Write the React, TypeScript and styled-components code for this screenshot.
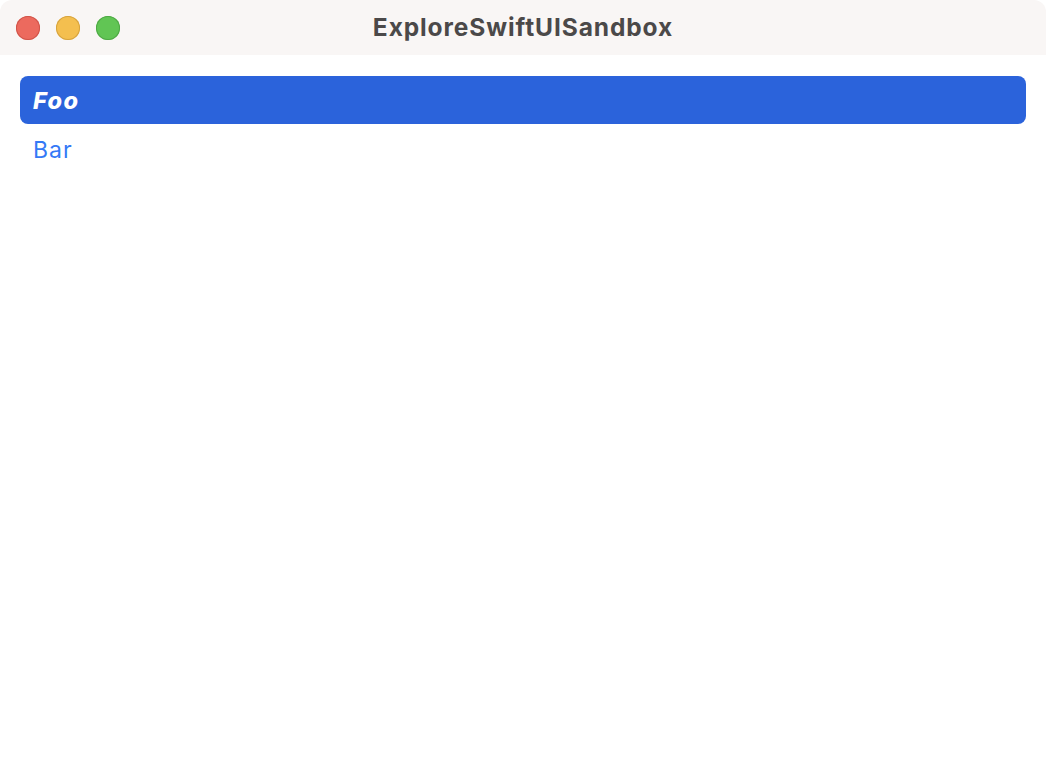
import React from "react";
import styled, { createGlobalStyle } from "styled-components";

const Global = createGlobalStyle`
  html, body { margin: 0; padding: 0; background: #ffffff; }
  body { font-family: Inter, "Noto Sans", sans-serif; }
`;

const Window = styled.div`
  width: 1046px;
  height: 774px;
  display: flex;
  flex-direction: column;
  background: #ffffff;
  border-radius: 12px 12px 0 0;
  overflow: hidden;
`;

const TitleBar = styled.div`
  height: 55px;
  flex: none;
  display: flex;
  align-items: center;
  position: relative;
  background: #f9f6f5;
  padding-left: 16px;
  box-sizing: border-box;
`;

const Lights = styled.div`
  display: flex;
  gap: 16px;
  margin-top: 1px;
`;

const Light = styled.div<{ $fill: string; $edge: string }>`
  width: 24px;
  height: 24px;
  border-radius: 50%;
  background: ${(p) => p.$fill};
  box-shadow: inset 0 0 0 1px ${(p) => p.$edge};
`;

const Title = styled.div`
  position: absolute;
  left: 0;
  right: 0;
  top: 0;
  bottom: 0;
  display: flex;
  align-items: center;
  justify-content: center;
  padding-bottom: 1px;
  font-size: 24.5px;
  font-weight: 700;
  color: #4b4949;
  letter-spacing: 0.9px;
  pointer-events: none;
`;

const List = styled.div`
  display: flex;
  flex-direction: column;
  padding: 21px 20px 0 20px;
`;

const Row = styled.div<{ $selected?: boolean }>`
  height: 48px;
  display: flex;
  align-items: center;
  padding-left: 13px;
  border-radius: 8px;
  font-size: ${(p) => (p.$selected ? "23.5px" : "23px")};
  background: ${(p) => (p.$selected ? "#2b63db" : "transparent")};
  color: ${(p) => (p.$selected ? "#ffffff" : "#3479f6")};
  font-weight: ${(p) => (p.$selected ? 800 : 400)};
  font-style: ${(p) => (p.$selected ? "italic" : "normal")};
  letter-spacing: ${(p) => (p.$selected ? "1.4px" : "1px")};
`;

const BarRow = styled(Row)`
  padding-top: 2px;
`;

export default function App() {
  return (
    <>
      <Global />
      <Window>
        <TitleBar>
          <Lights>
            <Light $fill="#ec6a5e" $edge="#d0554a" />
            <Light $fill="#f4bf4f" $edge="#d6a33f" />
            <Light $fill="#61c554" $edge="#4fa845" />
          </Lights>
          <Title>ExploreSwiftUISandbox</Title>
        </TitleBar>
        <List>
          <Row $selected>Foo</Row>
          <BarRow>Bar</BarRow>
        </List>
      </Window>
    </>
  );
}
